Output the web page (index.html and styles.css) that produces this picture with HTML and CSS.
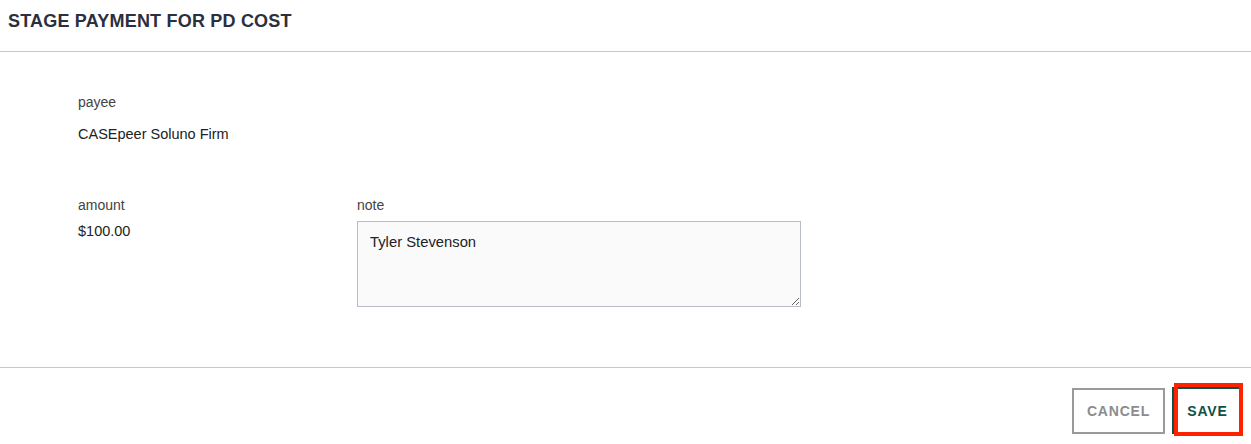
FILE: index.html
```html
<!DOCTYPE html>
<html lang="en">
<head>
<meta charset="utf-8">
<title>Stage Payment for PD Cost</title>
<link rel="stylesheet" href="styles.css">
</head>
<body>
<div class="modal">
  <header class="modal-header">
    <h1 class="modal-title">STAGE PAYMENT FOR PD COST</h1>
  </header>
  <section class="modal-body">
    <div class="field field-payee">
      <div class="field-label">payee</div>
      <div class="field-value payee-value">CASEpeer Soluno Firm</div>
    </div>
    <div class="row">
      <div class="field field-amount">
        <div class="field-label">amount</div>
        <div class="field-value amount-value">$100.00</div>
      </div>
      <div class="field field-note">
        <div class="field-label">note</div>
        <textarea class="note-input">Tyler Stevenson</textarea>
      </div>
    </div>
  </section>
  <footer class="modal-footer">
    <button class="btn btn-cancel">CANCEL</button>
    <div class="save-wrap">
      <button class="btn btn-save">SAVE</button>
      <span class="highlight"></span>
    </div>
  </footer>
</div>
</body>
</html>
```
FILE: styles.css
```css
html, body {
  margin: 0;
  padding: 0;
  background: #ffffff;
}
body {
  font-family: "Liberation Sans", Arial, sans-serif;
  color: #333333;
}
.modal {
  width: 1251px;
}
.modal-header {
  height: 52px;
  border-bottom: 1px solid #c8c8c8;
  box-sizing: border-box;
  padding: 11px 8px 0 8px;
}
.modal-title {
  margin: 0;
  font-size: 18px;
  line-height: 20px;
  font-weight: bold;
  color: #2b2f3e;
  letter-spacing: 0.2px;
}
.modal-body {
  padding: 41px 0 0 78px;
  height: 315px;
  box-sizing: border-box;
}
.field-label {
  font-size: 14px;
  line-height: 18px;
  color: #444444;
}
.field-value {
  font-size: 14.5px;
  line-height: 20px;
  color: #222222;
}
.payee-value {
  margin-top: 13px;
}
.row {
  display: flex;
  margin-top: 52px;
}
.field-amount {
  width: 279px;
}
.amount-value {
  margin-top: 7px;
}
.field-note {
  display: flex;
  flex-direction: column;
}
.note-input {
  margin-top: 7px;
  width: 444px;
  height: 86px;
  box-sizing: border-box;
  border: 1px solid #b9bccb;
  background: #fafafa;
  padding: 11px 12px;
  font-family: "Liberation Sans", Arial, sans-serif;
  font-size: 14.8px;
  line-height: 18px;
  color: #222222;
  resize: vertical;
  border-radius: 0;
  outline: none;
}
.modal-footer {
  border-top: 1px solid #c8c8c8;
  display: flex;
  justify-content: flex-end;
  align-items: flex-start;
  gap: 7px;
  padding: 19px 8px 0 0;
  height: 77px;
  box-sizing: border-box;
}
.btn {
  font-family: "Liberation Sans", Arial, sans-serif;
  font-weight: bold;
  font-size: 14px;
  letter-spacing: 0.8px;
  background: #ffffff;
  height: 47px;
  box-sizing: border-box;
  cursor: pointer;
  border-radius: 0;
  margin: 0;
}
.btn-cancel {
  width: 93px;
  border: 2px solid #9a9a9a;
  color: #8c8c8c;
  margin-top: 1px;
  height: 46px;
}
.save-wrap {
  position: relative;
}
.btn-save {
  width: 71px;
  border: 2px solid #0e5247;
  color: #0e5247;
}
.highlight {
  position: absolute;
  top: -4px;
  left: 2px;
  right: 0;
  bottom: -2px;
  border: 4px solid #ff2200;
  pointer-events: none;
}
```
